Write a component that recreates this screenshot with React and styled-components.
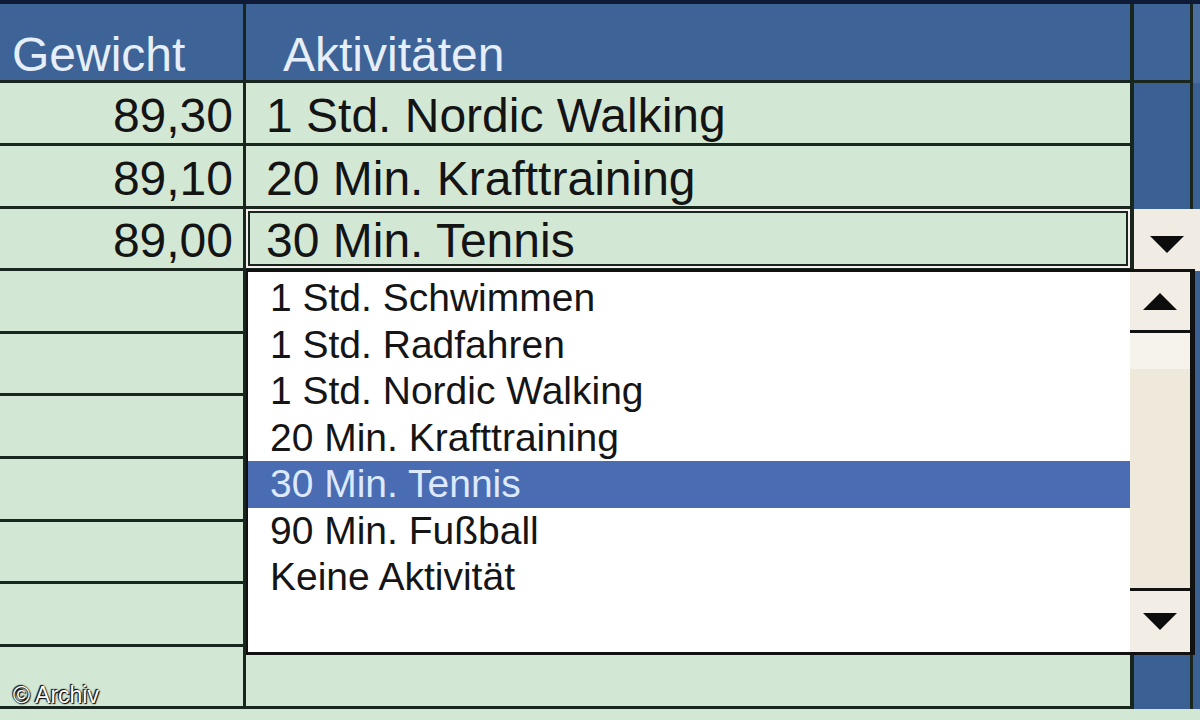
import React from 'react'
import styled, { createGlobalStyle } from 'styled-components'

const GlobalStyle = createGlobalStyle`
  html, body { margin: 0; padding: 0; }
  body {
    width: 1200px;
    height: 720px;
    overflow: hidden;
    background: #d3e8d4;
    font-family: "Liberation Sans", Arial, sans-serif;
  }
`

const LINE = '#18261d'
const HEAD_BLUE = '#3d6397'
const SIDE_BLUE = '#3a6094'
const GREEN = '#d3e8d4'
const BEIGE = '#f0ece3'

const Sheet = styled.div`
  position: relative;
  width: 1200px;
  height: 720px;
  overflow: hidden;
  box-sizing: border-box;
  border-top: 4px solid #0f1a36;
  display: grid;
  grid-template-columns: 246px 888px 59px 7px;
  grid-template-rows: 79px 63px repeat(9, 62.6px);
`

const HeadCell = styled.div`
  box-sizing: border-box;
  background: ${HEAD_BLUE};
  color: #e6eef9;
  font-size: 48px;
  display: flex;
  align-items: flex-start;
  padding: 23px 0 0 ${p => p.$indent || 0}px;
  border-bottom: 3px solid ${LINE};
  border-right: ${p => p.$line || 0}px solid ${LINE};
  white-space: nowrap;
  overflow: hidden;
`

const NumCell = styled.div`
  box-sizing: border-box;
  background: ${GREEN};
  color: #141414;
  font-size: 48px;
  display: flex;
  align-items: center;
  justify-content: flex-end;
  padding: 5px 10px 0 0;
  border-bottom: 3px solid ${LINE};
  border-right: 3px solid ${LINE};
`

const TextCell = styled.div`
  position: relative;
  box-sizing: border-box;
  background: ${GREEN};
  color: #141414;
  font-size: 48px;
  display: flex;
  align-items: center;
  padding: 5px 0 0 20px;
  border-bottom: 3px solid ${LINE};
  border-right: 4px solid ${LINE};
  white-space: nowrap;
  box-shadow: ${p => (p.$active ? `inset 0 0 0 2px #f7eef0, inset 0 0 0 4px ${LINE}` : 'none')};
`

const SideCell = styled.div`
  box-sizing: border-box;
  background: ${SIDE_BLUE};
  border-right: 3px solid ${LINE};
`

const DropButton = styled.div`
  grid-column: span 2;
  background: ${BEIGE};
  display: flex;
  align-items: center;
  justify-content: center;
  padding-top: 10px;
  box-sizing: border-box;
`

const EdgeCell = styled.div`
  background: ${p => (p.$head ? '#4a6e9f' : SIDE_BLUE)};
`

const Dropdown = styled.div`
  position: absolute;
  top: calc(100% + 1px);
  left: 0;
  width: 949px;
  height: 386px;
  box-sizing: border-box;
  background: #fff;
  border: 3px solid #111;
  border-left-width: 2px;
  border-right-width: 5px;
  display: flex;
  z-index: 2;
`

const List = styled.ul`
  flex: 1;
  margin: 0;
  padding: 3px 0 0;
  list-style: none;
`

const Item = styled.li`
  height: 46.5px;
  box-sizing: border-box;
  padding-left: 22px;
  display: flex;
  align-items: center;
  font-size: 39px;
  color: ${p => (p.$selected ? '#dce9ff' : '#151515')};
  background: ${p => (p.$selected ? '#4a6cb3' : 'transparent')};
`

const Scrollbar = styled.div`
  width: 60px;
  display: flex;
  flex-direction: column;
  background: ${BEIGE};
`

const ScrollButton = styled.div`
  height: ${p => p.$h}px;
  box-sizing: border-box;
  display: flex;
  align-items: center;
  justify-content: center;
  background: #f2eee6;
  border-bottom: ${p => (p.$up ? '3px' : '0')} solid #111;
  border-top: ${p => (p.$up ? '0' : '3px')} solid #111;
`

const Track = styled.div`
  flex: 1;
  background: linear-gradient(#f6f3ec 0 36px, #efe9dc 36px);
`

const Watermark = styled.div`
  position: absolute;
  left: 13px;
  bottom: 11px;
  font-size: 23px;
  color: #fff;
  text-shadow: 0 0 2px #000, 1px 1px 1px #000, -1px -1px 1px #000;
  z-index: 3;
`

const Triangle = ({ up }) => (
  <svg width="34" height="17" viewBox="0 0 34 17">
    <polygon points={up ? '17,0 34,17 0,17' : '0,0 34,0 17,17'} fill="#0c0c0c" />
  </svg>
)

const rows = [
  { weight: '89,30', activity: '1 Std. Nordic Walking' },
  { weight: '89,10', activity: '20 Min. Krafttraining' },
  { weight: '89,00', activity: '30 Min. Tennis', active: true },
  {}, {}, {}, {}, {}, {}, {},
]

const options = [
  '1 Std. Schwimmen',
  '1 Std. Radfahren',
  '1 Std. Nordic Walking',
  '20 Min. Krafttraining',
  '30 Min. Tennis',
  '90 Min. Fußball',
  'Keine Aktivität',
]

export default function App() {
  return (
    <>
      <GlobalStyle />
      <Sheet>
        <HeadCell $indent={12} $line={3}>Gewicht</HeadCell>
        <HeadCell $indent={37} $line={4}>Aktivitäten</HeadCell>
        <HeadCell $line={3} />
        <EdgeCell $head />

        {rows.map((r, i) => (
          <React.Fragment key={i}>
            <NumCell>{r.weight}</NumCell>
            <TextCell $active={r.active}>
              {r.activity}
              {r.active && (
                <Dropdown>
                  <List>
                    {options.map(o => (
                      <Item key={o} $selected={o === r.activity}>{o}</Item>
                    ))}
                  </List>
                  <Scrollbar>
                    <ScrollButton $up $h={61}><Triangle up /></ScrollButton>
                    <Track />
                    <ScrollButton $h={64}><Triangle /></ScrollButton>
                  </Scrollbar>
                </Dropdown>
              )}
            </TextCell>
            {r.active ? (
              <DropButton><Triangle /></DropButton>
            ) : (
              <>
                <SideCell />
                <EdgeCell />
              </>
            )}
          </React.Fragment>
        ))}
        <Watermark>© Archiv</Watermark>
      </Sheet>
    </>
  )
}
